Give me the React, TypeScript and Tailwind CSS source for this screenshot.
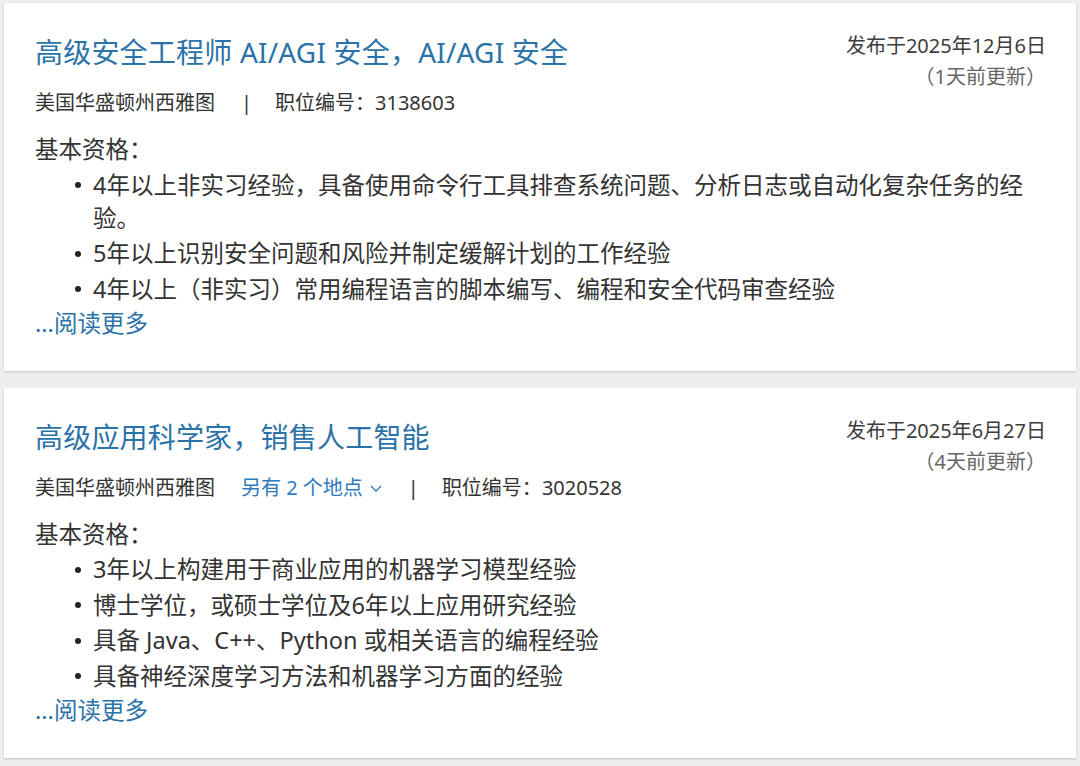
import React from "react";

const FONT = { fontFamily: '"Noto Sans", "Noto Sans CJK SC", sans-serif' };

function Chevron() {
  return (
    <svg width="12" height="8" viewBox="0 0 12 8" fill="none" className="ml-[7px] mt-[2px]">
      <path d="M1.5 1.5 L6 6 L10.5 1.5" stroke="#2f7bbf" strokeWidth="1.4" strokeLinecap="round" strokeLinejoin="round" />
    </svg>
  );
}

type Job = {
  title: string;
  date: string;
  updated: string;
  id: string;
  more?: string;
  items: string[];
};

const jobs: Job[] = [
  {
    title: "高级安全工程师 AI/AGI 安全，AI/AGI 安全",
    date: "发布于2025年12月6日",
    updated: "（1天前更新）",
    id: "3138603",
    items: [
      "4年以上非实习经验，具备使用命令行工具排查系统问题、分析日志或自动化复杂任务的经验。",
      "5年以上识别安全问题和风险并制定缓解计划的工作经验",
      "4年以上（非实习）常用编程语言的脚本编写、编程和安全代码审查经验",
    ],
  },
  {
    title: "高级应用科学家，销售人工智能",
    date: "发布于2025年6月27日",
    updated: "（4天前更新）",
    id: "3020528",
    more: "另有 2 个地点",
    items: [
      "3年以上构建用于商业应用的机器学习模型经验",
      "博士学位，或硕士学位及6年以上应用研究经验",
      "具备 Java、C++、Python 或相关语言的编程经验",
      "具备神经深度学习方法和机器学习方面的经验",
    ],
  },
];

function Card({ job }: { job: Job }) {
  return (
    <div className="bg-white shadow-[0_1px_2px_rgba(0,0,0,0.16)] pt-[28px] pl-[31px] pr-[30px] pb-[31px]">
      <div className="flex justify-between items-start">
        <div className="flex flex-col">
          <div className="mt-[3px] text-[28px] leading-[36px] text-[#2b72a8] tracking-[0.2px]">{job.title}</div>
          <div className="mt-[18px] flex items-center text-[20px] leading-[30px] text-[#333333]">
            <span>美国华盛顿州西雅图</span>
            {job.more && (
              <span className="ml-[26px] flex items-center text-[#2f7bbf]">
                {job.more}
                <Chevron />
              </span>
            )}
            <span className="ml-[26px]">|</span>
            <span className="ml-[23px]">职位编号：{job.id}</span>
          </div>
        </div>
        <div className="flex flex-col items-end text-[20px] leading-[30px]">
          <div className="text-[#3d3d3d]">{job.date}</div>
          <div className="mt-[1px] text-[#666666]">{job.updated}</div>
        </div>
      </div>
      <div className="mt-[15px] text-[23.5px] leading-[33px] text-[#333333]">
        <div>基本资格：</div>
        <ul className="mt-[0px] pl-[37px] pr-[12px]">
          {job.items.map((t, i) => (
            <li key={i} className="flex mt-[2.5px]">
              <span className="w-[21px] h-[33px] shrink-0 flex items-center">
                <span className="ml-[3px] w-[6px] h-[6px] rounded-full bg-[#222222]" />
              </span>
              <span className="flex-1">{t}</span>
            </li>
          ))}
        </ul>
        <div className="mt-[1px] text-[#2b72a8]">...阅读更多</div>
      </div>
    </div>
  );
}

export default function App() {
  return (
    <div style={FONT} className="min-h-screen bg-[#eeeef0] pt-[3px] px-[4px] pb-[9px] flex flex-col gap-[17px]">
      {jobs.map((j, i) => (
        <Card key={i} job={j} />
      ))}
    </div>
  );
}
